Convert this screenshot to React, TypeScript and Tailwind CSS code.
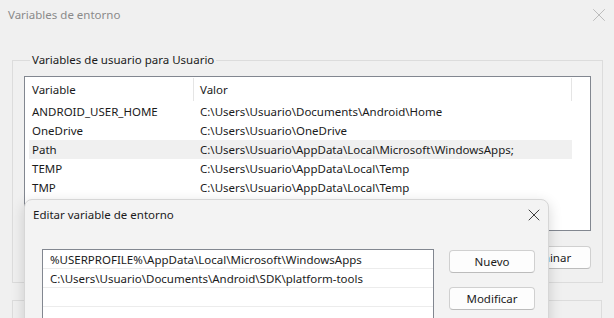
import { X } from 'lucide-react';

const userVars = [
  { name: 'ANDROID_USER_HOME', value: 'C:\\Users\\Usuario\\Documents\\Android\\Home' },
  { name: 'OneDrive', value: 'C:\\Users\\Usuario\\OneDrive' },
  { name: 'Path', value: 'C:\\Users\\Usuario\\AppData\\Local\\Microsoft\\WindowsApps;', selected: true },
  { name: 'TEMP', value: 'C:\\Users\\Usuario\\AppData\\Local\\Temp' },
  { name: 'TMP', value: 'C:\\Users\\Usuario\\AppData\\Local\\Temp' },
];

const pathEntries = [
  '%USERPROFILE%\\AppData\\Local\\Microsoft\\WindowsApps',
  'C:\\Users\\Usuario\\Documents\\Android\\SDK\\platform-tools',
  '',
  '',
];

function WinButton({ label, className = '' }: { label?: string; className?: string }) {
  return (
    <button
      className={`h-[23px] w-[86px] rounded-[4px] border border-[#d0d0d0] border-b-[#bcbcbc] bg-[#fdfdfd] text-[11.5px] text-[#1b1b1b] ${className}`}
    >
      {label}
    </button>
  );
}

export default function App() {
  return (
    <div
      className="relative h-[318px] w-[614px] overflow-hidden bg-[#f0f0f0] text-[11.5px] text-[#1b1b1b]"
      style={{ fontFamily: '"Segoe UI", "Noto Sans", sans-serif' }}
    >
      {/* background window */}
      <div className="flex h-[30px] items-center justify-between pl-[8px] pr-[4px]">
        <span className="text-[#8a8a8a]">Variables de entorno</span>
        <X size={22} strokeWidth={0.8} className="text-[#a8a8a8]" />
      </div>

      <fieldset className="mx-[12px] mt-[23px] h-[230px] border border-[#dcdcdc] px-[11px] pt-[9px]">
        <legend className="ml-[6px] px-[2px] leading-[14px]">Variables de usuario para Usuario</legend>

        <div className="h-[155px] w-[567px] border border-[#828790] bg-white">
          <div className="flex h-[25px] items-center">
            <div className="flex h-[23px] w-[169px] items-center border-r border-[#e5e5e5] pl-[7px]">Variable</div>
            <div className="flex h-[23px] w-[378px] items-center border-r border-[#e5e5e5] pl-[6px]">Valor</div>
          </div>
          {userVars.map((v) => (
            <div
              key={v.name}
              className={`ml-[4px] flex h-[19px] w-[543px] items-center pt-[1px] ${v.selected ? 'bg-[#f0f0f0]' : ''}`}
            >
              <div className="w-[171px] pl-[3px]">{v.name}</div>
              <div>{v.value}</div>
            </div>
          ))}
        </div>

        {/* Nuevo... / Editar... sit under the dialog, only Eliminar shows */}
        <div className="mt-[15px] flex justify-end gap-[8px]">
          <WinButton />
          <WinButton />
          <WinButton label="Eliminar" className="pl-[2px]" />
        </div>
      </fieldset>

      <fieldset className="mx-[12px] mt-[10px] h-[60px] border border-[#dcdcdc] px-[11px]">
        <legend className="ml-[4px] px-[2px] leading-[14px]">Variables del sistema</legend>
      </fieldset>

      {/* dialog over the window */}
      <div className="absolute left-[24px] top-[199px] h-[140px] w-[525px] rounded-[8px] border border-[#d6d6d6] bg-[#f3f3f3] shadow-[0_4px_14px_rgba(0,0,0,0.16)]">
        <div className="flex h-[30px] items-center justify-between pl-[8px] pr-[4px]">
          <span>Editar variable de entorno</span>
          <X size={20} strokeWidth={1} className="text-[#1b1b1b]" />
        </div>

        <div className="mt-[19px] flex pl-[17px]">
          <div className="h-[90px] w-[392px] border border-[#828790] bg-white">
            {pathEntries.map((p, i) => (
              <div key={i} className="flex h-[19px] items-center border-b border-[#ececec] pl-[7px] pt-[1px]">
                {p}
              </div>
            ))}
          </div>
          <div className="ml-[15px] flex flex-col gap-[14px] pt-[1px]">
            <WinButton label="Nuevo" />
            <WinButton label="Modificar" />
          </div>
        </div>
      </div>
    </div>
  );
}
